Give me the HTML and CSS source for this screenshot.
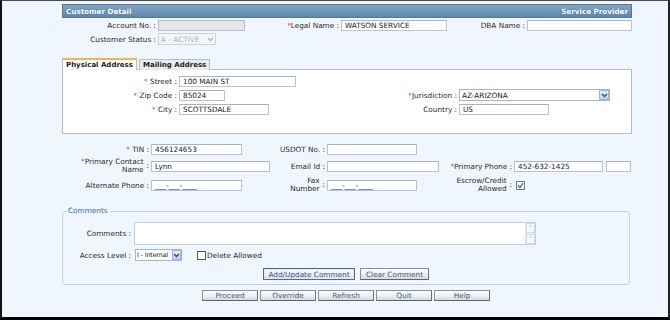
FILE: index.html
```html
<!DOCTYPE html>
<html>
<head>
<meta charset="utf-8">
<title>Customer Detail</title>
<link rel="stylesheet" href="styles.css">
</head>
<body>
<div class="frame">
  <div class="page">
    <div class="hdr"><span>Customer Detail</span><span>Service Provider</span></div>

    <div class="top">
      <div class="lbl"><span>Account No. :</span></div>
      <div class="cell"><span class="inp dis w87"></span></div>
      <div class="lbl"><span><i>*</i>Legal Name :</span></div>
      <div class="cell"><span class="inp w106">WATSON SERVICE</span></div>
      <div class="lbl"><span>DBA Name :</span></div>
      <div class="cell"><span class="inp w105"></span></div>
      <div class="lbl"><span>Customer Status :</span></div>
      <div class="cell span5"><span class="sel dis w58"><span class="stxt">A - ACTIVE</span><b class="arr"><svg width="7" height="5" viewBox="0 0 7 5"><path d="M1 1 L3.5 3.5 L6 1" fill="none" stroke="currentColor" stroke-width="1.3"/></svg></b></span></div>
    </div>

    <div class="tabs">
      <span class="tab on">Physical Address</span>
      <span class="tab">Mailing Address</span>
    </div>
    <div class="panel">
      <div class="lbl"><span><i>*</i> Street :</span></div>
      <div class="cell span3"><span class="inp w117">100 MAIN ST</span></div>
      <div class="lbl"><span><i>*</i> Zip Code :</span></div>
      <div class="cell"><span class="inp w46">85024</span></div>
      <div class="lbl"><span><i>*</i>Jurisdiction :</span></div>
      <div class="cell"><span class="sel w151"><span class="stxt">AZ-ARIZONA</span><b class="arr blue"><svg width="7" height="5" viewBox="0 0 7 5"><path d="M1 1 L3.5 3.5 L6 1" fill="none" stroke="currentColor" stroke-width="1.3"/></svg></b></span></div>
      <div class="lbl"><span><i>*</i> City :</span></div>
      <div class="cell"><span class="inp w90">SCOTTSDALE</span></div>
      <div class="lbl"><span>Country :</span></div>
      <div class="cell"><span class="inp w90">US</span></div>
    </div>

    <div class="mid">
      <div class="lbl"><span><i>*</i> TIN :</span></div>
      <div class="cell"><span class="inp w91">456124653</span></div>
      <div class="lbl"><span>USDOT No. :</span></div>
      <div class="cell span3"><span class="inp w90"></span></div>

      <div class="lbl two"><span><i>*</i>Primary Contact<br>Name</span><span class="colon">:</span></div>
      <div class="cell"><span class="inp w119">Lynn</span></div>
      <div class="lbl"><span>Email Id :</span></div>
      <div class="cell"><span class="inp w112"></span></div>
      <div class="lbl"><span><i>*</i>Primary Phone :</span></div>
      <div class="cell"><span class="inp w89">452-632-1425</span><span class="inp w25 ml3"></span></div>

      <div class="lbl"><span>Alternate Phone :</span></div>
      <div class="cell"><span class="inp w91">___-___-____</span></div>
      <div class="lbl two"><span>Fax<br>Number</span><span class="colon">:</span></div>
      <div class="cell"><span class="inp w90">___-___-____</span></div>
      <div class="lbl two"><span>Escrow/Credit<br>Allowed</span><span class="colon">:</span></div>
      <div class="cell"><span class="chk on"><svg width="7" height="7" viewBox="0 0 7 7"><path d="M1 3.5 L3 5.5 L6 1.2" fill="none" stroke="#2f7d2f" stroke-width="1.2"/></svg></span></div>
    </div>

    <fieldset class="comments">
      <legend>Comments</legend>
      <div class="crow">
        <div class="clbl">Comments :</div>
        <div class="ta"><span class="sb"><b>&#708;</b><b>&#709;</b></span></div>
      </div>
      <div class="crow arow">
        <div class="clbl">Access Level :</div>
        <span class="sel w47 ml4 small"><span class="stxt">I - Internal</span><b class="arr blue"><svg width="7" height="5" viewBox="0 0 7 5"><path d="M1 1 L3.5 3.5 L6 1" fill="none" stroke="currentColor" stroke-width="1.3"/></svg></b></span>
        <span class="chk plain"></span><span class="dtxt">Delete Allowed</span>
      </div>
      <div class="cbtns">
        <span class="btn focus w92">Add/Update Comment</span>
        <span class="btn w69">Clear Comment</span>
      </div>
    </fieldset>

    <div class="actions">
      <span class="btn w56">Proceed</span>
      <span class="btn w56">Override</span>
      <span class="btn w56">Refresh</span>
      <span class="btn w56">Quit</span>
      <span class="btn w56">Help</span>
    </div>
  </div>
</div>
</body>
</html>
```

FILE: styles.css
```css
html, body {
  margin: 0;
  padding: 0;
  background: #eff6fe;
}
.frame {
  width: 670px;
  height: 320px;
  box-sizing: border-box;
  border-top: 1px solid #4a4a4a;
  border-left: 2px solid #111;
  border-right: 2px solid #222;
  border-bottom: 3px solid #000;
  background: #eff6fe;
  font-family: "DejaVu Sans", Verdana, sans-serif;
  font-size: 7.3px;
  color: #2b2b2b;
  overflow: hidden;
}
.page {
  margin-left: 60px;
  width: 570px;
  padding-top: 3px;
}
.hdr {
  height: 14px;
  box-sizing: border-box;
  display: flex;
  justify-content: space-between;
  align-items: center;
  padding: 0 3px;
  background: linear-gradient(#80a5c6, #5f87ac);
  border: 1px solid #56799b;
  color: #fff;
  font-weight: bold;
  font-size: 7.2px;
  text-shadow: 0 0 1px #3d5f80;
}
i { font-style: normal; color: #e02020; }

.lbl {
  text-align: right;
  padding-right: 2px;
  white-space: nowrap;
  display: flex;
  justify-content: flex-end;
  align-items: center;
}
.lbl.two { line-height: 8px; }
.lbl.two .colon { margin-left: 3px; }
.cell { display: flex; align-items: center; }
.span5 { grid-column: span 5; }
.span3 { grid-column: span 3; }

.inp {
  display: inline-flex;
  align-items: center;
  height: 11px;
  box-sizing: border-box;
  border: 1px solid #b9c4d0;
  border-top-color: #a9b4c0;
  background: #fff;
  padding: 0 3px;
  color: #222;
  white-space: nowrap;
  overflow: hidden;
}
.inp.dis { background: #e4e6e9; border-color: #b8bcc2; }
.w25 { width: 25px; }
.w46 { width: 46px; }
.w47 { width: 47px; }
.w56 { width: 56px; }
.w58 { width: 58px; }
.w69 { width: 69px; }
.w87 { width: 87px; }
.w89 { width: 89px; }
.w90 { width: 90px; }
.w91 { width: 91px; }
.w92 { width: 92px; }
.w105 { width: 105px; }
.w106 { width: 106px; }
.w112 { width: 112px; }
.w117 { width: 117px; }
.w119 { width: 119px; }
.w151 { width: 151px; }
.ml3 { margin-left: 3px; }
.ml4 { margin-left: 4px; }

.sel {
  display: inline-flex;
  align-items: center;
  justify-content: space-between;
  height: 12px;
  box-sizing: border-box;
  border: 1px solid #a9b6c4;
  background: #fff;
  color: #222;
  padding-left: 2px;
}
.sel .stxt { white-space: nowrap; overflow: hidden; }
.sel.small { padding-left: 1px; }
.sel.small .stxt { font-size: 6.4px; letter-spacing: -0.15px; }
.sel .arr {
  width: 10px;
  height: 10px;
  flex: none;
  display: flex;
  align-items: center;
  justify-content: center;
  color: #b0b6bd;
}
.sel .arr.blue {
  background: linear-gradient(#e3eefb, #b9cfee);
  border: 1px solid #9fb6d6;
  box-sizing: border-box;
  color: #2b4f8a;
}
.sel.small .arr { width: 9px; }
.sel.dis { background: #f3f6f9; border-color: #cdd3da; color: #b1b1b1; }

.top {
  display: grid;
  grid-template-columns: 96px 87px 96px 106px 80px 105px;
  row-gap: 2px;
  margin-top: 1px;
}
.top > div { height: 12px; }

.tabs {
  margin-top: 13px;
  display: flex;
  gap: 2px;
  height: 11px;
}
.tab {
  display: flex;
  align-items: center;
  padding: 0 3px;
  font-weight: bold;
  font-size: 7px;
  color: #1e1e1e;
  background: #e8ecef;
  border: 1px solid #b9bec4;
  border-bottom: none;
  box-sizing: border-box;
  height: 11px;
  margin-top: 1px;
  white-space: nowrap;
}
.tab.on {
  background: #fff;
  border-top: 2px solid #f0b451;
  height: 12px;
  margin-top: 0;
  margin-bottom: -1px;
  position: relative;
  z-index: 1;
}
.panel {
  height: 65px;
  box-sizing: border-box;
  background: #fff;
  border: 1px solid #bcbcbc;
  display: grid;
  grid-template-columns: 116px 160px 120px 1fr;
  grid-auto-rows: 12px;
  row-gap: 2px;
  padding-top: 5px;
  align-content: start;
}

.mid {
  margin-top: 10px;
  display: grid;
  grid-template-columns: 89px 123px 53px 115px 72px 120px;
  grid-template-rows: 11px 16px 16px;
  row-gap: 3px;
}

.chk {
  display: inline-flex;
  align-items: center;
  justify-content: center;
  width: 9px;
  height: 9px;
  box-sizing: border-box;
  border: 1px solid #5c7fa6;
  background: #f6f9fc;
  margin-left: 2px;
}
.chk.plain { border-color: #555; background: #fff; margin-left: 15px; }

.comments {
  margin: 14px 0 0 0;
  width: 568px;
  box-sizing: border-box;
  border: 1px solid #c9d2dc;
  border-radius: 3px;
  padding: 7px 0 4px 0;
}
.comments legend {
  color: #3b63c4;
  padding: 0 2px;
  margin-left: 3px;
  line-height: 8px;
}
.crow { display: flex; align-items: center; }
.clbl {
  width: 68px;
  text-align: right;
  white-space: nowrap;
}
.ta {
  margin-left: 3px;
  width: 402px;
  height: 23px;
  box-sizing: border-box;
  border: 1px solid #c7cfd8;
  background: #fff;
  display: flex;
  justify-content: flex-end;
}
.sb {
  width: 9px;
  display: flex;
  flex-direction: column;
  justify-content: space-between;
  background: #f0f3f6;
  border-left: 1px solid #e0e5ea;
}
.sb b {
  font-weight: normal;
  font-size: 6px;
  line-height: 8px;
  text-align: center;
  color: #9aa4ae;
  border: 1px solid #d3dae1;
  background: #f5f7f9;
}
.arow { margin-top: 4px; }
.dtxt { margin-left: 1px; }
.cbtns {
  display: flex;
  justify-content: center;
  gap: 5px;
  margin-top: 7px;
}
.btn {
  display: inline-flex;
  align-items: center;
  justify-content: center;
  height: 12px;
  box-sizing: border-box;
  border: 1px solid #8a8f96;
  border-right-color: #6d7278;
  border-bottom-color: #5f646a;
  background: linear-gradient(#ffffff, #e9ebee 60%, #d7dade);
  color: #3d5a85;
  white-space: nowrap;
}
.btn.focus { border-color: #4d6a93; box-shadow: inset 0 0 0 1px #dfe8f4; }
.actions {
  display: flex;
  justify-content: center;
  gap: 2px;
  margin-top: 5px;
  padding-right: 2px;
}
.actions .btn { height: 11px; }
```
